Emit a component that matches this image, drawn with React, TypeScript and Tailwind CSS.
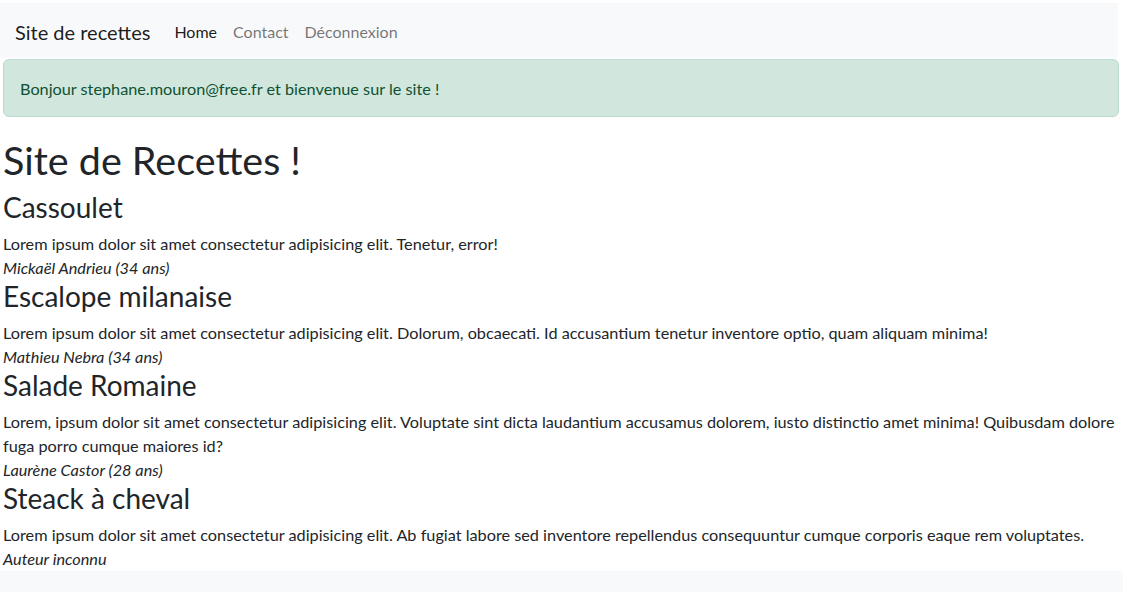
const recipes = [
  {
    title: 'Cassoulet',
    text: 'Lorem ipsum dolor sit amet consectetur adipisicing elit. Tenetur, error!',
    author: 'Mickaël Andrieu (34 ans)',
  },
  {
    title: 'Escalope milanaise',
    text: 'Lorem ipsum dolor sit amet consectetur adipisicing elit. Dolorum, obcaecati. Id accusantium tenetur inventore optio, quam aliquam minima!',
    author: 'Mathieu Nebra (34 ans)',
  },
  {
    title: 'Salade Romaine',
    text: 'Lorem, ipsum dolor sit amet consectetur adipisicing elit. Voluptate sint dicta laudantium accusamus dolorem, iusto distinctio amet minima! Quibusdam dolore fuga porro cumque maiores id?',
    author: 'Laurène Castor (28 ans)',
  },
  {
    title: 'Steack à cheval',
    text: 'Lorem ipsum dolor sit amet consectetur adipisicing elit. Ab fugiat labore sed inventore repellendus consequuntur cumque corporis eaque rem voluptates.',
    author: 'Auteur inconnu',
  },
];

export default function App() {
  return (
    <div className="min-h-[592px] bg-white pt-[3px] font-['Lato','Noto_Sans',sans-serif] text-[16.25px] leading-6 text-[#212529]">
      <nav className="mr-[5px] flex h-[55px] items-center bg-[#f8f9fa] pl-[15px] pt-[3px]">
        <a href="#" className="mr-4 text-[20px] leading-[30px] text-black/90">
          Site de recettes
        </a>
        <ul className="flex text-[16px]">
          <li>
            <a href="#" className="block px-2 py-2 text-black/90">Home</a>
          </li>
          <li>
            <a href="#" className="block px-2 py-2 text-black/55">Contact</a>
          </li>
          <li>
            <a href="#" className="block px-2 py-2 text-black/55">Déconnexion</a>
          </li>
        </ul>
      </nav>

      <div className="mb-4 ml-[3px] mr-[4px] mt-px rounded-md border border-[#badbcc] bg-[#d1e7dd] px-4 pb-[15px] pt-[17px] text-[#0f5132]">
        Bonjour stephane.mouron@free.fr et bienvenue sur le site !
      </div>

      <main className="px-[3px] pt-[3px]">
        <h1 className="mb-2 text-[39.5px] leading-[47px]">Site de Recettes !</h1>
        {recipes.map((recipe) => (
          <article key={recipe.title}>
            <h3 className="mb-2 text-[28px] leading-[33px]">{recipe.title}</h3>
            <div>{recipe.text}</div>
            <i className="block">{recipe.author}</i>
          </article>
        ))}
      </main>

      <footer className="h-16 bg-[#f8f9fa]" />
    </div>
  );
}
